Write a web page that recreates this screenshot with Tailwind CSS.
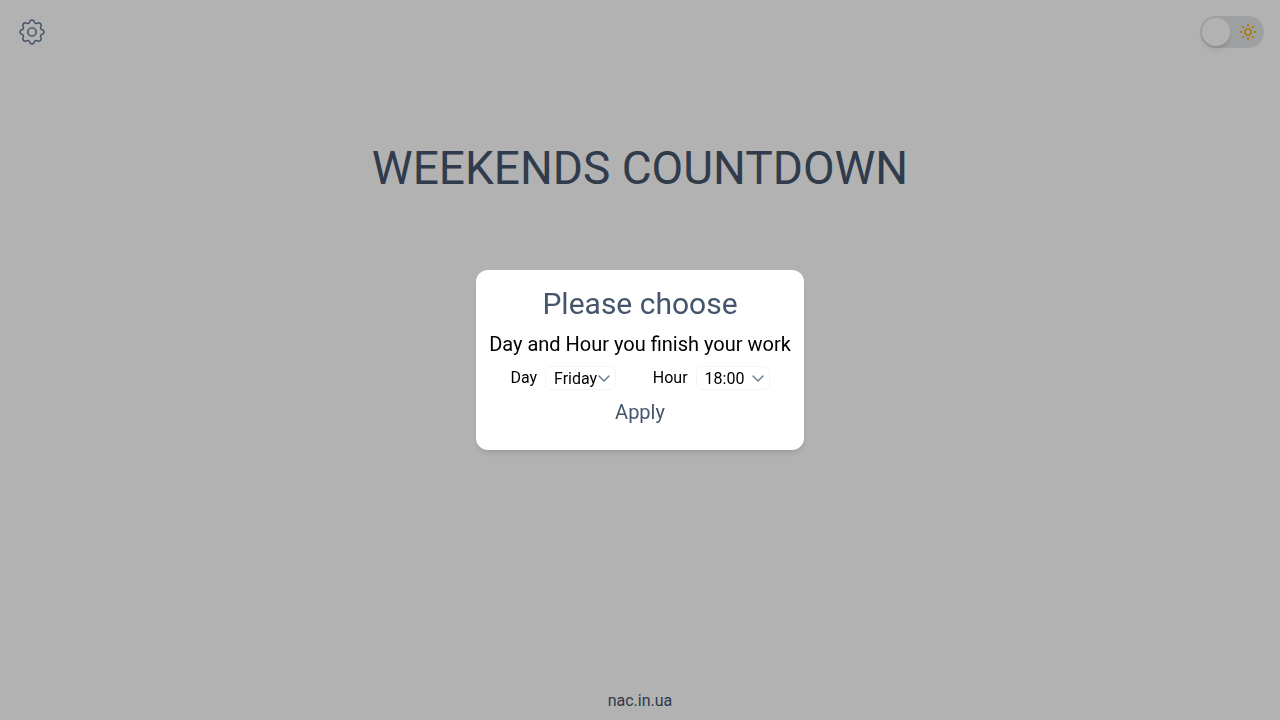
<!DOCTYPE html>
<html lang="en">
<head>
<meta charset="utf-8">
<meta name="viewport" content="width=device-width, initial-scale=1">
<title>Weekends Countdown</title>
<script src="https://cdn.jsdelivr.net/npm/@tailwindcss/browser@4"></script>
</head>
<body class="min-h-screen bg-white font-['Roboto',sans-serif] text-black">
<div class="flex min-h-screen flex-col">
  <header class="flex items-center justify-between p-4">
    <button type="button" aria-label="Settings" class="size-8 text-slate-500">
      <svg class="size-8" viewBox="0 0 24 24" fill="none" stroke="currentColor" stroke-width="1.1" stroke-linecap="round" stroke-linejoin="round" aria-hidden="true">
        <path d="M10.325 4.317c.426-1.756 2.924-1.756 3.35 0a1.724 1.724 0 002.573 1.066c1.543-.94 3.31.826 2.37 2.37a1.724 1.724 0 001.065 2.572c1.756.426 1.756 2.924 0 3.35a1.724 1.724 0 00-1.066 2.573c.94 1.543-.826 3.31-2.37 2.37a1.724 1.724 0 00-2.572 1.065c-.426 1.756-2.924 1.756-3.35 0a1.724 1.724 0 00-2.573-1.066c-1.543.94-3.31-.826-2.37-2.37a1.724 1.724 0 00-1.065-2.572c-1.756-.426-1.756-2.924 0-3.35a1.724 1.724 0 001.066-2.573c-.94-1.543.826-3.31 2.37-2.37.996.608 2.296.07 2.572-1.065z"/>
        <circle cx="12" cy="12" r="3.1"/>
      </svg>
    </button>
    <button type="button" role="switch" aria-checked="false" aria-label="Dark theme" class="flex h-8 w-16 items-center justify-between rounded-full bg-[#e3e5e7] pr-2 pl-0.5">
      <span class="size-7 rounded-full bg-white shadow-md"></span>
      <svg class="size-4 text-[#f0b423]" viewBox="0 0 16 16" fill="currentColor" aria-hidden="true">
        <circle cx="8" cy="8" r="3.300" fill="none" stroke="currentColor" stroke-width="1.8"/>
        <rect x="7" y="0" width="2" height="2"/><rect x="7" y="14" width="2" height="2"/>
        <rect x="0" y="7" width="2" height="2"/><rect x="14" y="7" width="2" height="2"/>
        <circle cx="2.900" cy="2.900" r="1.2"/><circle cx="13.100" cy="2.900" r="1.2"/>
        <circle cx="2.900" cy="13.100" r="1.2"/><circle cx="13.100" cy="13.100" r="1.2"/>
      </svg>
    </button>
  </header>
  <main class="grow pt-20">
    <h1 class="text-center text-[46px] leading-12 text-slate-600 uppercase">Weekends Countdown</h1>
  </main>
  <footer class="pb-[7px] text-center text-base leading-6 text-slate-600"><a href="#">nac.in.ua</a></footer>
</div>

<div class="fixed inset-0 flex items-center justify-center bg-black/30">
  <form role="dialog" aria-labelledby="dialog-title" class="flex w-82 flex-col items-center gap-2 rounded-xl bg-white px-4 pt-4 pb-6 shadow-md">
    <h2 id="dialog-title" class="text-3xl leading-9 text-slate-600">Please choose</h2>
    <p class="text-xl whitespace-nowrap">Day and Hour you finish your work</p>
    <div class="flex w-full justify-around">
      <div class="flex items-center gap-2">
        <label for="day">Day</label>
        <div class="relative">
          <select id="day" class="block h-6 w-[71px] appearance-none rounded-md border border-slate-100 bg-white pl-2"><option>Friday</option></select>
          <svg class="pointer-events-none absolute top-1.5 right-[5px] size-3.5 text-slate-500" viewBox="0 0 14 14" fill="none" stroke="currentColor" stroke-width="1.4" stroke-linecap="round" stroke-linejoin="round" aria-hidden="true"><path d="M2 4l5 5 5-5"/></svg>
        </div>
      </div>
      <div class="flex items-center gap-2">
        <label for="hour">Hour</label>
        <div class="relative">
          <select id="hour" class="block h-6 w-[74px] appearance-none rounded-md border border-slate-100 bg-white pl-2"><option>18:00</option></select>
          <svg class="pointer-events-none absolute top-1.5 right-[5px] size-3.5 text-slate-500" viewBox="0 0 14 14" fill="none" stroke="currentColor" stroke-width="1.4" stroke-linecap="round" stroke-linejoin="round" aria-hidden="true"><path d="M2 4l5 5 5-5"/></svg>
        </div>
      </div>
    </div>
    <button type="button" class="text-xl text-slate-600">Apply</button>
  </form>
</div>
</body>
</html>
